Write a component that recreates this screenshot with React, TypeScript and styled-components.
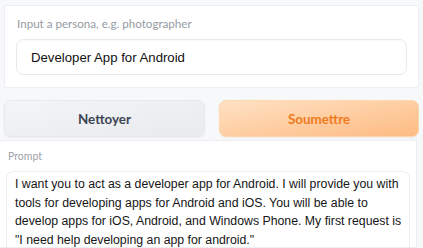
import React from "react";
import styled, { createGlobalStyle } from "styled-components";

const GlobalStyle = createGlobalStyle`
  html, body {
    margin: 0;
    padding: 0;
    background: #f7f8fa;
  }
  * {
    box-sizing: border-box;
  }
`;

const Page = styled.div`
  width: 423px;
  height: 248px;
  overflow: hidden;
  padding-top: 5px;
`;

const Panel = styled.div`
  background: #ffffff;
  border: 1px solid #eceef2;
  border-radius: 2px;
`;

const PersonaPanel = styled(Panel)`
  margin: 0 4px;
  padding: 12px 11px 12px 11px;
`;

const PromptPanel = styled(Panel)`
  margin: 3px 6px 0 0;
  padding: 10px 6px 0 6px;
  border-left: none;
`;

const Label = styled.div<{ $small?: boolean }>`
  font-family: Lato, "Open Sans", sans-serif;
  font-size: ${(p) => (p.$small ? 10.5 : 11.6)}px;
  color: ${(p) => (p.$small ? "#9ea3ab" : "#959ba4")};
  line-height: ${(p) => (p.$small ? 10 : 12)}px;
  margin-bottom: ${(p) => (p.$small ? 10 : 9)}px;
  padding-left: ${(p) => (p.$small ? 2 : 1)}px;
`;

const TextInput = styled.div`
  height: 36px;
  border: 1px solid #e8eaee;
  border-radius: 7px;
  box-shadow: inset 0 1px 2px rgba(0, 0, 0, 0.03);
  display: flex;
  align-items: center;
  padding-left: 14px;
  font-family: "Liberation Sans", Arial, sans-serif;
  font-size: 13.2px;
  color: #111;
`;

const ButtonRow = styled.div`
  display: grid;
  grid-template-columns: 201px 200px;
  gap: 14px;
  margin: 12px 4px 0;
`;

const Button = styled.div<{ $primary?: boolean }>`
  height: 37px;
  border-radius: 7px;
  display: flex;
  align-items: center;
  justify-content: center;
  font-family: Lato, "Open Sans", sans-serif;
  font-weight: 700;
  font-size: 13.4px;
  border: 1px solid ${(p) => (p.$primary ? "#fed7aa" : "#e6e8ec")};
  color: ${(p) => (p.$primary ? "#f07b1c" : "#3d4554")};
  background: ${(p) =>
    p.$primary
      ? "linear-gradient(to bottom right, #ffe1c4, #fdbb82)"
      : "linear-gradient(to bottom right, #f4f5f7, #e8eaee)"};
  box-shadow: 0 1px 2px rgba(0, 0, 0, 0.05);
`;

const TextArea = styled.div`
  border: 1px solid #eceef1;
  border-bottom: none;
  border-radius: 7px 7px 0 0;
  padding: 3px 4px 0 8px;
  font-family: "Liberation Sans", Arial, sans-serif;
  font-size: 12.3px;
  line-height: 18.5px;
  color: #161616;
  height: 76px;
`;

export default function App() {
  return (
    <>
      <GlobalStyle />
      <Page>
        <PersonaPanel>
          <Label>Input a persona, e.g. photographer</Label>
          <TextInput>Developer App for Android</TextInput>
        </PersonaPanel>
        <ButtonRow>
          <Button>Nettoyer</Button>
          <Button $primary>Soumettre</Button>
        </ButtonRow>
        <PromptPanel>
          <Label $small>Prompt</Label>
          <TextArea>
            I want you to act as a developer app for Android. I will provide you
            with tools for developing apps for Android and iOS. You will be able
            to develop apps for iOS, Android, and Windows Phone. My first request
            is "I need help developing an app for android."
          </TextArea>
        </PromptPanel>
      </Page>
    </>
  );
}
